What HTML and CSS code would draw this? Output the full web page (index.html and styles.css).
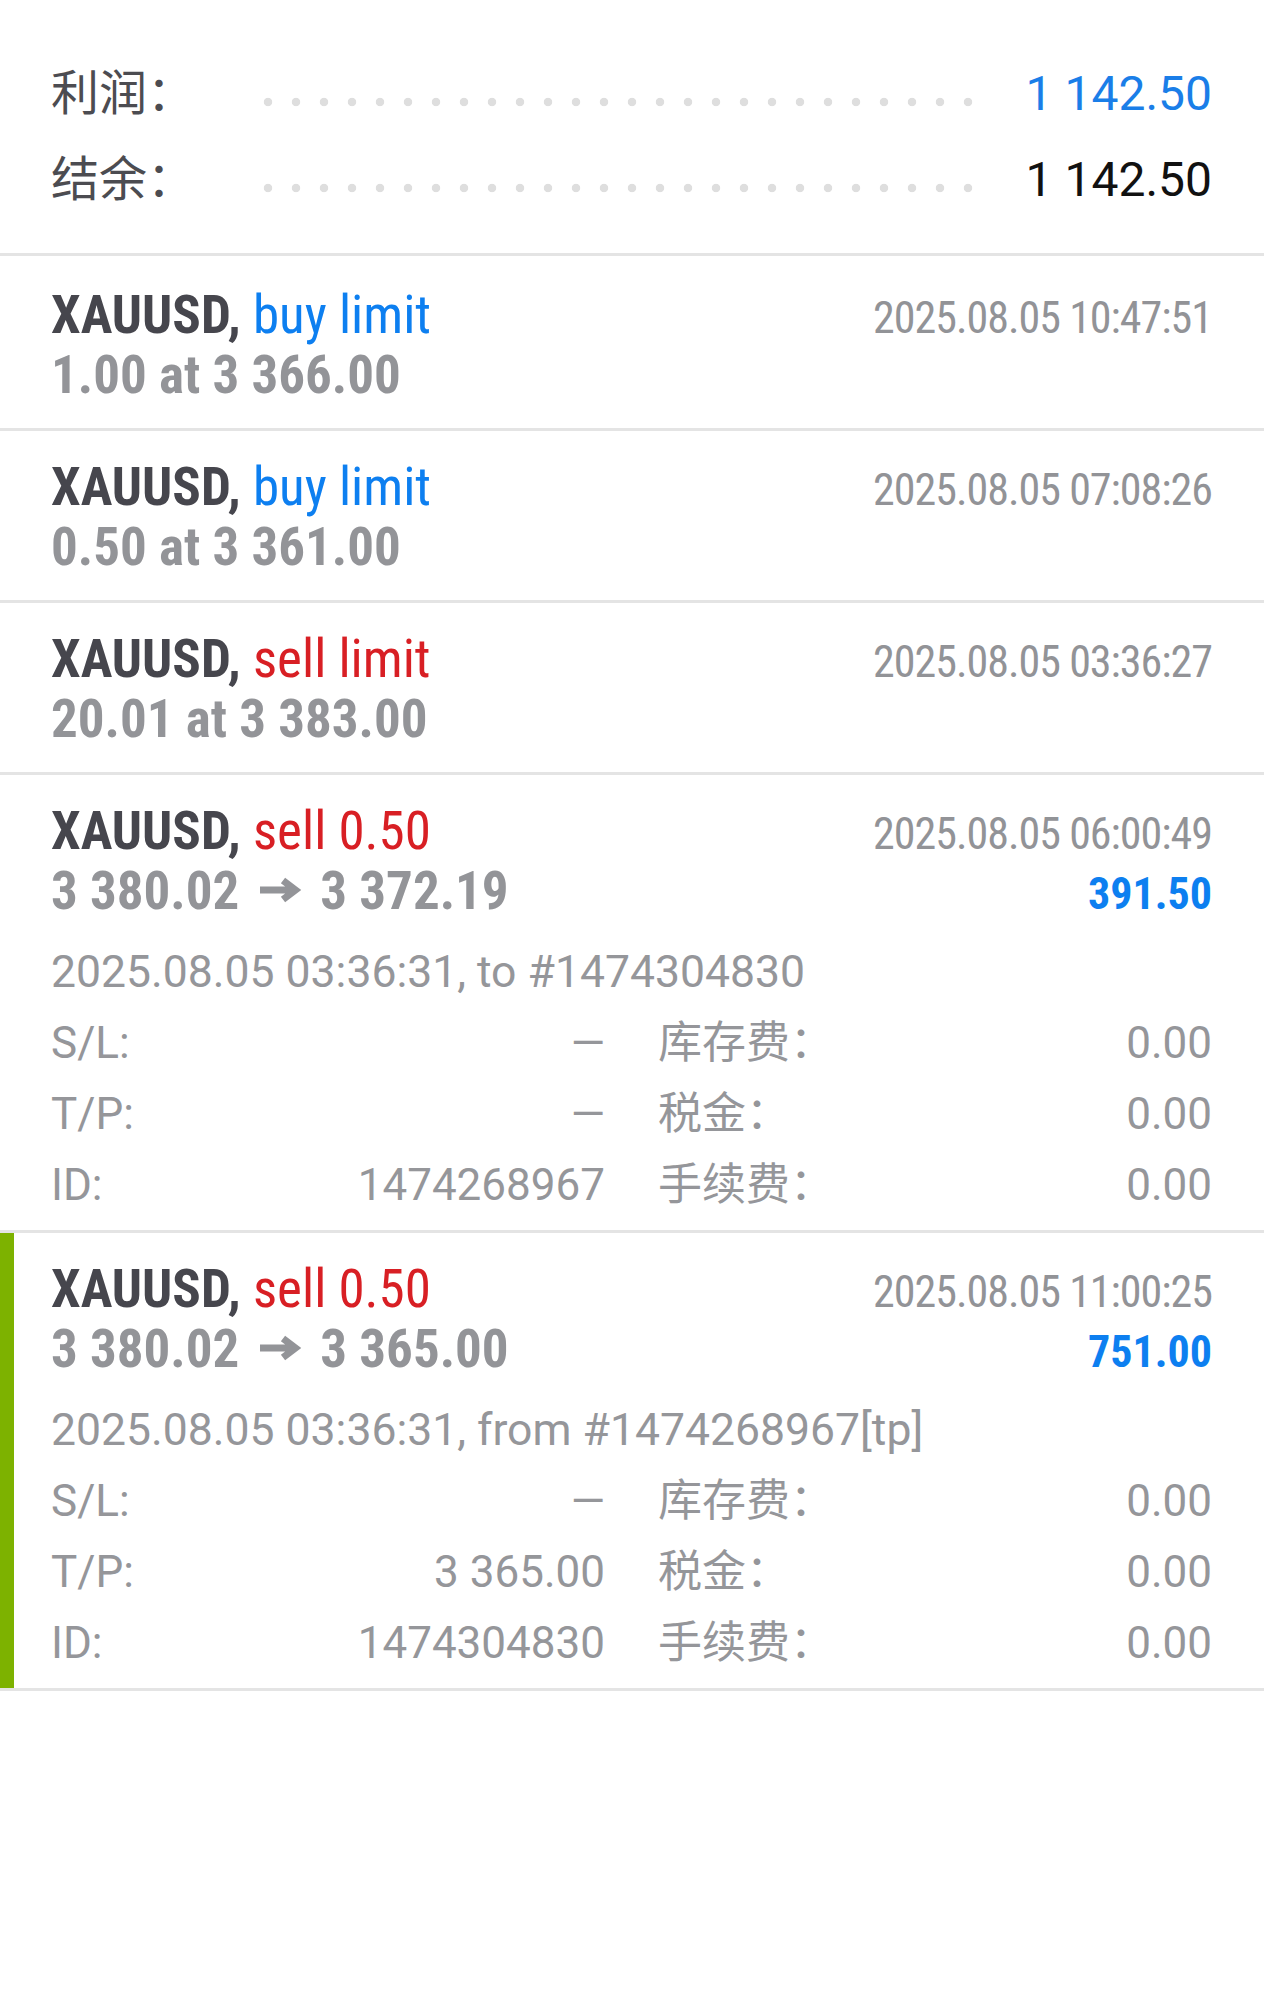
FILE: index.html
```html
<!DOCTYPE html>
<html lang="zh">
<head>
    <meta charset="UTF-8">
    <meta name="viewport" content="width=device-width, initial-scale=1.0">
    <title>交易历史</title>
    <link rel="stylesheet" href="styles.css">
</head>
<body>
    <div class="summary">
        <div class="summary-row">
            <span class="summary-label">利润：</span>
            <span class="dots"></span>
            <span class="summary-value blue">1 142.50</span>
        </div>
        <div class="summary-row">
            <span class="summary-label">结余：</span>
            <span class="dots"></span>
            <span class="summary-value">1 142.50</span>
        </div>
    </div>

    <div class="orders">
        <div class="order">
            <div class="order-line">
                <span class="symbol">XAUUSD, <span class="type buy">buy limit</span></span>
                <span class="time">2025.08.05 10:47:51</span>
            </div>
            <div class="order-line">
                <span class="price">1.00 at 3 366.00</span>
            </div>
        </div>

        <div class="order">
            <div class="order-line">
                <span class="symbol">XAUUSD, <span class="type buy">buy limit</span></span>
                <span class="time">2025.08.05 07:08:26</span>
            </div>
            <div class="order-line">
                <span class="price">0.50 at 3 361.00</span>
            </div>
        </div>

        <div class="order">
            <div class="order-line">
                <span class="symbol">XAUUSD, <span class="type sell">sell limit</span></span>
                <span class="time">2025.08.05 03:36:27</span>
            </div>
            <div class="order-line">
                <span class="price">20.01 at 3 383.00</span>
            </div>
        </div>

        <div class="order">
            <div class="order-line">
                <span class="symbol">XAUUSD, <span class="type sell">sell 0.50</span></span>
                <span class="time">2025.08.05 06:00:49</span>
            </div>
            <div class="order-line">
                <span class="price">3 380.02<svg class="arrow" viewBox="0 0 45 26"><path d="M2 13H36M25 3.5L37.5 13L25 22.5"/></svg>3 372.19</span>
                <span class="result">391.50</span>
            </div>
            <div class="deal-info">2025.08.05 03:36:31, to #1474304830</div>
            <div class="deal-grid">
                <div class="cell"><span>S/L:</span><span>—</span></div>
                <div class="cell"><span>库存费：</span><span>0.00</span></div>
                <div class="cell"><span>T/P:</span><span>—</span></div>
                <div class="cell"><span>税金：</span><span>0.00</span></div>
                <div class="cell"><span>ID:</span><span>1474268967</span></div>
                <div class="cell"><span>手续费：</span><span>0.00</span></div>
            </div>
        </div>

        <div class="order active">
            <div class="order-line">
                <span class="symbol">XAUUSD, <span class="type sell">sell 0.50</span></span>
                <span class="time">2025.08.05 11:00:25</span>
            </div>
            <div class="order-line">
                <span class="price">3 380.02<svg class="arrow" viewBox="0 0 45 26"><path d="M2 13H36M25 3.5L37.5 13L25 22.5"/></svg>3 365.00</span>
                <span class="result">751.00</span>
            </div>
            <div class="deal-info">2025.08.05 03:36:31, from #1474268967[tp]</div>
            <div class="deal-grid">
                <div class="cell"><span>S/L:</span><span>—</span></div>
                <div class="cell"><span>库存费：</span><span>0.00</span></div>
                <div class="cell"><span>T/P:</span><span>3 365.00</span></div>
                <div class="cell"><span>税金：</span><span>0.00</span></div>
                <div class="cell"><span>ID:</span><span>1474304830</span></div>
                <div class="cell"><span>手续费：</span><span>0.00</span></div>
            </div>
        </div>
    </div>
</body>
</html>
```
FILE: styles.css
```css
body {
    margin: 0;
    background-color: white;
    font-family: Roboto, "Noto Sans CJK SC", sans-serif;
}

.summary {
    padding: 51px 52px 30px 51px;
}
.summary-row {
    display: flex;
    height: 86px;
    line-height: 86px;
    font-size: 48px;
}
.summary-label {
    flex: 0 0 203px;
    color: #4c4c51;
}
.dots {
    flex: 1;
    margin-right: 53px;
    background-image: radial-gradient(circle, #dedede 3.8px, transparent 4.6px);
    background-size: 28px 10px;
    background-repeat: repeat-x;
    background-position: 0 46px;
}
.summary-value {
    color: #111111;
}
.summary-value.blue {
    color: #1a7ee8;
}

.orders {
    border-bottom: 3px solid #e4e4e4;
}
.order {
    border-top: 3px solid #e4e4e4;
    padding: 26px 52px 23px 51px;
}
.order:first-child {
    padding-top: 29px;
}
.order.active {
    box-shadow: inset 14px 0 0 #7db200;
}
.order-line {
    display: flex;
    justify-content: space-between;
    align-items: baseline;
    height: 60px;
    line-height: 60px;
    font-family: "Roboto Condensed", Roboto, sans-serif;
    font-stretch: condensed;
}
.symbol {
    font-size: 53px;
    font-weight: bold;
    color: #46464d;
}
.type {
    font-weight: normal;
}
.buy {
    color: #0d7ff0;
}
.sell {
    color: #d81f24;
}
.time {
    font-size: 44px;
    letter-spacing: -1px;
    color: #929397;
}
.price {
    font-size: 53px;
    font-weight: bold;
    color: #939498;
}
.arrow {
    width: 45px;
    height: 26px;
    margin: 0 17px 0 19px;
    vertical-align: 6px;
    fill: none;
    stroke: #939498;
    stroke-width: 7;
}
.result {
    font-size: 44px;
    font-weight: bold;
    color: #0d7ff0;
}

.deal-info,
.deal-grid {
    font-size: 44px;
    line-height: 71px;
    color: #95969a;
}
.deal-info {
    margin-top: 16px;
    font-size: 44.5px;
}
.order:has(.deal-grid) {
    padding-bottom: 9px;
}
.deal-grid {
    display: grid;
    grid-template-columns: 1fr 1fr;
    column-gap: 53px;
}
.cell {
    display: flex;
    justify-content: space-between;
}
```
